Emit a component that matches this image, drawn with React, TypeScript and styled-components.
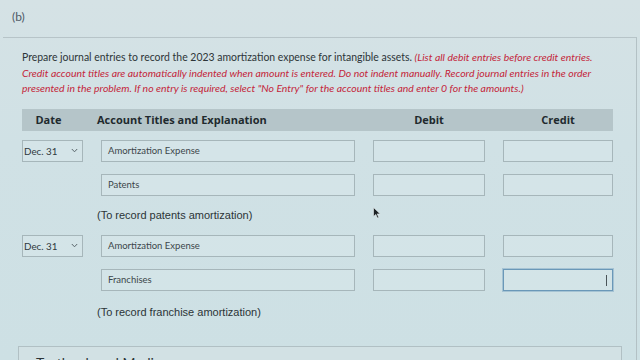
import React from "react";
import styled, { createGlobalStyle } from "styled-components";

const GlobalStyle = createGlobalStyle`
  html, body { margin: 0; padding: 0; }
  body {
    background: #cfe0e4;
    font-family: Lato, "Open Sans", sans-serif;
    color: #2b3539;
  }
`;

const Page = styled.div`
  width: 640px;
  height: 360px;
  overflow: hidden;
  position: relative;
  background: linear-gradient(180deg, #d5e2e5 0%, #d0e1e5 40%, #cde0e4 100%);
`;

const TopBar = styled.div`
  height: 37px;
  padding: 9px 0 0 12px;
  box-sizing: border-box;
  font-family: Lato, sans-serif;
  font-size: 12px;
  color: #4e5a66;
`;

const Panel = styled.div`
  margin: 0 3px;
  border-top: 1px solid #b7c4c8;
  border-right: 1px solid #b3c1c5;
  padding: 12px 19px 0 19px;
  min-height: 330px;
  box-sizing: border-box;
`;

const Instructions = styled.p`
  margin: 0;
  font-family: Lato, sans-serif;
  font-size: 10.45px;
  line-height: 15.5px;
  color: #2d3538;
  width: 580px;
`;

const RedNote = styled.em`
  color: #c4253a;
  font-style: italic;
`;

const Table = styled.div`
  margin-top: 12px;
  display: grid;
  grid-template-columns: 61px 254px 112px 110px;
  column-gap: 18px;
  width: 593px;
`;

const HeaderBand = styled.div`
  grid-column: 1 / -1;
  display: grid;
  grid-template-columns: 61px 254px 112px 110px;
  column-gap: 18px;
  background: #b5c5c9;
  height: 22px;
  align-items: center;
  font-family: "Open Sans", sans-serif;
  font-weight: 700;
  font-size: 11px;
  color: #1f2a2e;
`;

const HeadCell = styled.div<{ $align?: string; $shift?: number }>`
  text-align: ${(p) => p.$align || "center"};
  margin-left: ${(p) => p.$shift || 0}px;
`;

const Row = styled.div<{ $top: number }>`
  grid-column: 1 / -1;
  display: grid;
  grid-template-columns: 61px 254px 112px 110px;
  column-gap: 18px;
  margin-top: ${(p) => p.$top}px;
  height: 22px;
`;

const Field = styled.div<{ $focus?: boolean }>`
  box-sizing: border-box;
  height: 22px;
  border: 1px solid ${(p) => (p.$focus ? "#6a98b8" : "#a6b6ba")};
  box-shadow: ${(p) => (p.$focus ? "0 0 0 1px rgba(90,140,180,0.35)" : "none")};
  background: rgba(222, 234, 237, 0.35);
  font-family: Lato, sans-serif;
  font-size: 9.5px;
  color: #3c464a;
  display: flex;
  align-items: center;
  padding-left: 6px;
  position: relative;
`;

const Caret = styled.span`
  position: absolute;
  right: 5px;
  top: 5px;
  width: 1px;
  height: 11px;
  background: #4a5458;
`;

const DateSelect = styled.div`
  box-sizing: border-box;
  height: 22px;
  border: 1px solid #a6b6ba;
  background: rgba(222, 234, 237, 0.35);
  font-family: Lato, sans-serif;
  font-size: 9.8px;
  color: #2f393d;
  display: flex;
  align-items: center;
  justify-content: space-between;
  padding: 0 4px 0 1px;
`;

const Empty = styled.div``;

const Explanation = styled.div<{ $h: number }>`
  grid-column: 2 / -1;
  height: ${(p) => p.$h}px;
  display: flex;
  align-items: center;
  margin-left: -4px;
  font-family: "Liberation Sans", Arial, sans-serif;
  font-size: 11px;
  color: #2b3437;
`;

const BottomBox = styled.div`
  position: absolute;
  left: 18px;
  top: 346px;
  width: 604px;
  height: 40px;
  border: 1px solid #b1c0c4;
  background: #d2e1e4;
  padding: 7px 0 0 17px;
  box-sizing: border-box;
  font-family: Lato, sans-serif;
  font-size: 14px;
  color: #2b3437;
`;

const Pointer = styled.svg`
  position: absolute;
  left: 373px;
  top: 207px;
`;

const Chevron = () => (
  <svg width="7" height="5" viewBox="0 0 7 5">
    <path d="M0.8 1 L3.5 3.8 L6.2 1" fill="none" stroke="#5a666b" strokeWidth="1" />
  </svg>
);

type Entry = {
  debitTitle: string;
  creditTitle: string;
  explanation: string;
  focusCredit?: boolean;
};

const entries: Entry[] = [
  { debitTitle: "Amortization Expense", creditTitle: "Patents", explanation: "(To record patents amortization)" },
  { debitTitle: "Amortization Expense", creditTitle: "Franchises", explanation: "(To record franchise amortization)", focusCredit: true },
];

export default function App() {
  return (
    <>
      <GlobalStyle />
      <Page>
        <TopBar>(b)</TopBar>
        <Panel>
          <Instructions>
            Prepare journal entries to record the 2023 amortization expense for intangible assets.{" "}
            <RedNote>
              (List all debit entries before credit entries. Credit account titles are automatically indented when amount
              is entered. Do not indent manually. Record journal entries in the order presented in the problem. If no entry
              is required, select "No Entry" for the account titles and enter 0 for the amounts.)
            </RedNote>
          </Instructions>
          <Table>
            <HeaderBand>
              <HeadCell $shift={-8}>Date</HeadCell>
              <HeadCell $align="left" $shift={-4}>Account Titles and Explanation</HeadCell>
              <HeadCell>Debit</HeadCell>
              <HeadCell>Credit</HeadCell>
            </HeaderBand>
            {entries.map((e, i) => (
              <React.Fragment key={i}>
                <Row $top={i === 0 ? 9 : 0}>
                  <DateSelect>
                    Dec. 31
                    <Chevron />
                  </DateSelect>
                  <Field>{e.debitTitle}</Field>
                  <Field />
                  <Field />
                </Row>
                <Row $top={12}>
                  <Empty />
                  <Field>{e.creditTitle}</Field>
                  <Field />
                  <Field $focus={e.focusCredit}>{e.focusCredit && <Caret />}</Field>
                </Row>
                <Explanation $h={i === 0 ? 39 : 42}>{e.explanation}</Explanation>
              </React.Fragment>
            ))}
          </Table>
        </Panel>
        <BottomBox>Textbook and Media</BottomBox>
        <Pointer width="8" height="12" viewBox="0 0 8 12">
          <path d="M0.5 0.5 L0.5 9.5 L2.8 7.4 L4.4 11 L5.8 10.4 L4.2 6.9 L7.2 6.9 Z" fill="#1d2326" stroke="#e8eef0" strokeWidth="0.6" />
        </Pointer>
      </Page>
    </>
  );
}
